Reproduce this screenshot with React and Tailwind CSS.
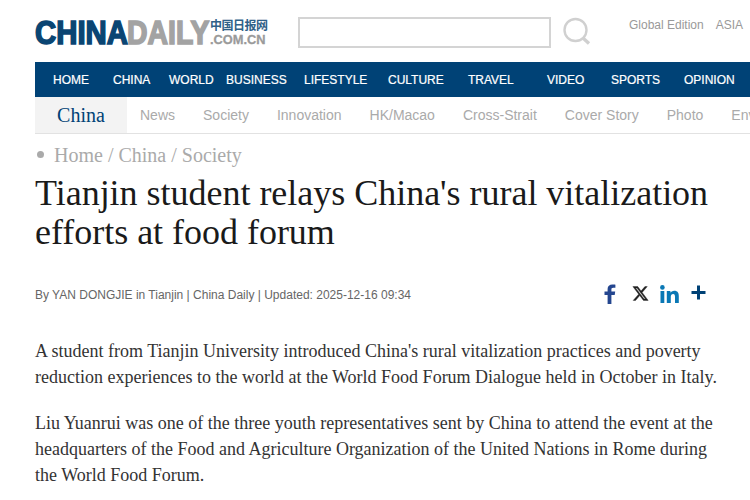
const nav = [
  ["HOME", "w-[60px]"], ["CHINA", "w-[56px]"], ["WORLD", "w-[57px]"], ["BUSINESS", "w-[78px]"], ["LIFESTYLE", "w-[84px]"],
  ["CULTURE", "w-[80px]"], ["TRAVEL", "w-[79px]"], ["VIDEO", "w-[64px]"], ["SPORTS", "w-[73px]"], ["OPINION", "w-[60px]"],
];
const sub = ["News", "Society", "Innovation", "HK/Macao", "Cross-Strait", "Cover Story", "Photo", "Environment"];

export default function App() {
  return (
    <div className="w-[750px] h-[500px] overflow-hidden bg-white font-['Liberation_Sans',Arial,sans-serif]">
      <header className="h-[62px] pl-[35px] flex items-start">
        <div className="w-[235px] h-[62px] flex items-start pt-[17px] whitespace-nowrap overflow-hidden">
          <div className="flex items-start w-[176px] h-[32px] overflow-visible">
            <span className="inline-block w-[92px] origin-left scale-x-[0.89] text-[33px] leading-[32px] font-bold text-[#0a4573] [-webkit-text-stroke:1.6px_#0a4573]">CHINA</span>
            <span className="inline-block w-[84px] origin-left scale-x-[0.86] text-[33px] leading-[32px] font-bold text-[#a3a3a3] [-webkit-text-stroke:1.6px_#a3a3a3]">DAILY</span>
          </div>
          <div className="flex flex-col -ml-[1px] pt-[1px]">
            <span className="text-[12px] leading-[14px] font-bold tracking-[-0.5px] text-[#2f6188] font-['Noto_Sans_CJK_SC',sans-serif]">中国日报网</span>
            <span className="text-[13.5px] leading-[14px] mt-[1px] font-bold text-[#9a9a9a] origin-left scale-x-[0.95] [-webkit-text-stroke:0.3px_#9a9a9a]">.COM.CN</span>
          </div>
        </div>
        <div className="mt-[17px] ml-[28px] w-[253px] h-[31px] border-2 border-[#d4d4d4] bg-white box-border" />
        <svg className="mt-[15px] ml-[11px] shrink-0" width="30" height="30" viewBox="0 0 30 30" fill="none" stroke="#d0d0d0">
          <circle cx="13.5" cy="15" r="11" strokeWidth="2.4" />
          <path d="M21.500 23.500 L27 28.500" strokeWidth="3.400" />
        </svg>
        <div className="ml-[37px] mt-[18px] text-[12px] leading-[14px] text-[#999] whitespace-nowrap">Global Edition<span className="ml-[12px]">ASIA</span></div>
      </header>

      <nav className="ml-[35px] h-[35px] bg-[#004276] flex items-center pl-[18px] whitespace-nowrap">
        {nav.map(([label, w]) => (
          <span key={label} className={`${w} shrink-0 text-[12px] text-white [-webkit-text-stroke:0.2px_white]`}>{label}</span>
        ))}
      </nav>

      <div className="ml-[35px] h-[37px] border-b border-[#e2e2e2] flex whitespace-nowrap overflow-hidden">
        <div className="w-[92px] shrink-0 h-[36px] bg-[#f3f3f3] flex items-center justify-center font-['Liberation_Serif',serif] text-[20px] text-[#004276]">China</div>
        <div className="flex items-center gap-[28px] pl-[13px] text-[14px] text-[#aaa]">
          {sub.map((s) => <span key={s}>{s}</span>)}
        </div>
      </div>

      <main className="px-[35px] font-['Liberation_Serif',serif]">
        <div className="flex items-center h-[41px] text-[20px] text-[#aaa]">
          <span className="w-[7px] h-[7px] ml-[2px] rounded-full bg-[#aaa]" />
          <span className="ml-[10px]">Home / China / Society</span>
        </div>
        <h1 className="text-[36px] leading-[39px] font-normal text-[#1a1a1a] -mt-[1px] tracking-[-0.02px] whitespace-nowrap">
          Tianjin student relays China's rural vitalization<br />efforts at food forum
        </h1>
        <div className="flex items-center justify-between mt-[28px] h-[30px] w-[671px]">
          <span className="font-['Liberation_Sans',Arial,sans-serif] text-[12px] text-[#666]">By YAN DONGJIE in Tianjin | China Daily | Updated: 2025-12-16 09:34</span>
          <div className="flex items-center -mt-[3px]">
            <svg width="13" height="20" viewBox="0 0 13 22" fill="#24468f" preserveAspectRatio="none"><path d="M3.600 22V12H.5V8.200h3.100V5.500C3.600 2.200 5.500.5 8.400.5c1.400 0 2.600.1 3 .2v3.400H9.300c-1.600 0-1.900.8-1.900 1.900v2.200h3.800l-.5 3.800H7.400v10z" /></svg>
            <svg className="ml-[15px]" width="17" height="17" viewBox="0 0 24 24" fill="#222" stroke="#222" strokeWidth="0.6"><path d="M18.244 2.250h3.308l-7.227 8.260 8.502 11.240H16.170l-5.214-6.817L4.990 21.750H1.680l7.730-8.835L1.254 2.250H8.080l4.713 6.231zm-1.161 17.520h1.833L7.084 4.126H5.117z" /></svg>
            <svg className="ml-[11px]" width="19" height="18" viewBox="0 0 19 18" fill="#0a78b5"><rect x="0.500" y="6" width="3.800" height="12" /><circle cx="2.400" cy="2.400" r="2.300" /><path d="M6.800 6h3.600v1.700C11 6.700 12.400 5.700 14.300 5.700c3.300 0 4.500 2.100 4.500 5.300v7h-3.800v-6.300c0-1.600-.4-2.800-1.900-2.800s-2.300 1.200-2.300 2.800V18H6.800z" /></svg>
            <svg className="ml-[12px] -mt-[3px]" width="15" height="15" viewBox="0 0 15 15" fill="#004276"><rect x="6" y="0.500" width="3" height="14" /><rect x="0.500" y="6" width="14" height="3" /></svg>
          </div>
        </div>
        <div className="mt-[28px] text-[18px] leading-[26px] text-[#333] w-[690px] flex flex-col gap-[20px]">
          <p>A student from Tianjin University introduced China's rural vitalization practices and poverty reduction experiences to the world at the World Food Forum Dialogue held in October in Italy.</p>
          <p>Liu Yuanrui was one of the three youth representatives sent by China to attend the event at the headquarters of the Food and Agriculture Organization of the United Nations in Rome during the World Food Forum.</p>
        </div>
      </main>
    </div>
  );
}
